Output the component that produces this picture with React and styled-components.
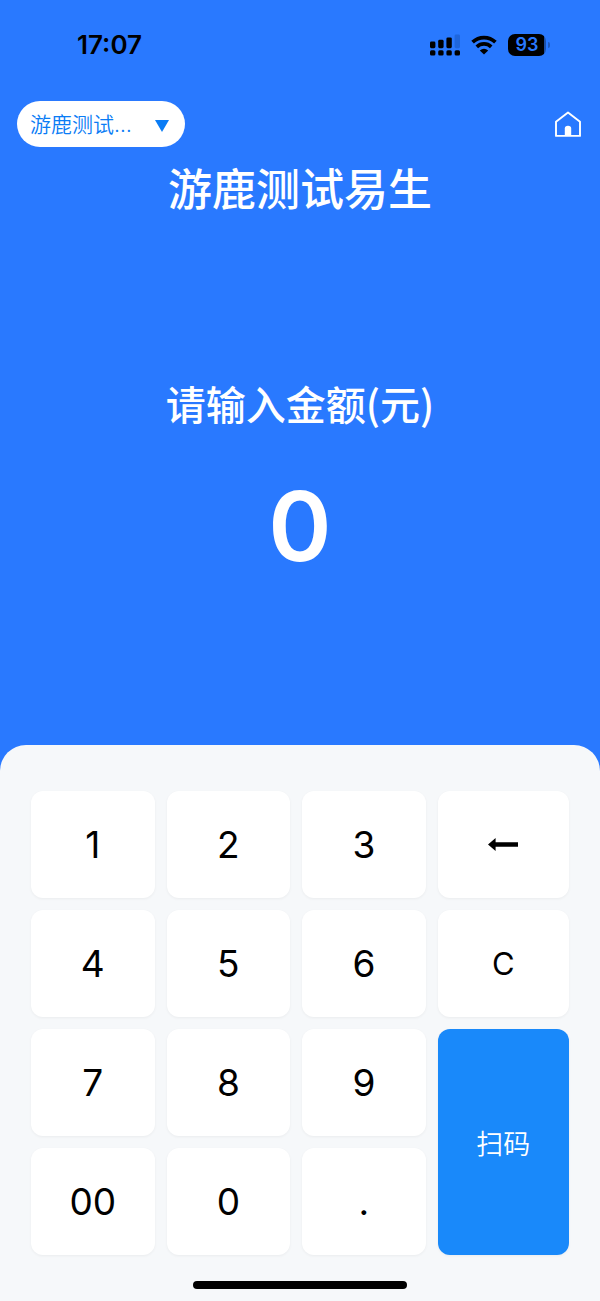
import React, { useState } from "react";
import styled, { createGlobalStyle } from "styled-components";

const GlobalStyle = createGlobalStyle`
  *, *::before, *::after { box-sizing: border-box; }
  body {
    margin: 0;
    background: #2979ff;
    font-family: Inter, "Noto Sans CJK SC", sans-serif;
  }
  button, select { font: inherit; color: inherit; border: 0; cursor: pointer; }
`;

const Page = styled.div`
  min-height: 100vh;
  display: flex;
  flex-direction: column;
  background: #2979ff;
`;

const StatusBar = styled.header`
  height: 90px;
  padding: 0 50px 0 77px;
  display: flex;
  align-items: center;
  justify-content: space-between;
  color: #000;
`;

const Clock = styled.time`
  font-size: 26px;
  line-height: 30px;
  font-weight: 600;
`;

const StatusIcons = styled.div`
  display: flex;
  align-items: center;
  gap: 11px;
`;

const Battery = styled.div`
  display: flex;
  align-items: center;
  gap: 2px;
`;

const BatteryBody = styled.span`
  width: 38px;
  height: 22px;
  border-radius: 7px;
  background: linear-gradient(90deg, #000 36px, #1c4fa6 36px);
  color: #2979ff;
  font-size: 18px;
  line-height: 22px;
  font-weight: 600;
  text-align: center;
`;

const BatteryTip = styled.span`
  width: 2px;
  height: 6px;
  border-radius: 0 2px 2px 0;
  background: #1f59bd;
`;

const TopBar = styled.nav`
  padding: 11px 19px 0 17px;
  display: flex;
  align-items: center;
  justify-content: space-between;
`;

const StorePicker = styled.label`
  display: grid;
  grid-template-columns: 1fr;
  align-items: center;
  width: 168px;
  height: 46px;
  border-radius: 23px;
  background: #fff;
  color: #0a7cf5;
`;

const StoreSelect = styled.select`
  grid-area: 1 / 1;
  width: 100%;
  height: 46px;
  padding: 0 46px 0 13px;
  border-radius: 23px;
  appearance: none;
  background: transparent;
  font-size: 21px;
  font-weight: 350;
  text-overflow: ellipsis;
  overflow: hidden;
  white-space: nowrap;
`;

const Caret = styled.svg`
  grid-area: 1 / 1;
  justify-self: end;
  margin: 4px 16px 0 0;
  pointer-events: none;
`;

const HomeButton = styled.button`
  display: flex;
  padding: 0;
  background: none;
  color: #fff;
`;

const Hero = styled.main`
  flex: 1;
  padding: 13px 16px 170px;
  color: #fff;
  text-align: center;
`;

const StoreName = styled.h1`
  margin: 0;
  font-size: 44px;
  line-height: 60px;
  font-weight: 500;
`;

const Prompt = styled.h2`
  margin: 153px 0 0;
  font-family: "Noto Sans CJK SC", sans-serif;
  font-size: 40px;
  line-height: 60px;
  font-weight: 500;
`;

const Amount = styled.output`
  display: block;
  margin-top: 45px;
  font-size: 96px;
  line-height: 96px;
  font-weight: 600;
`;

const Panel = styled.section`
  padding: 46px 31px 12px;
  border-radius: 26px 26px 0 0;
  background: #f6f8fa;
`;

const Keypad = styled.div`
  display: grid;
  grid-template-columns: 16fr 16fr 16fr 17fr;
  grid-auto-rows: 107px;
  gap: 12px;
`;

const Key = styled.button`
  display: flex;
  align-items: center;
  justify-content: center;
  padding: 0;
  border-radius: 12px;
  background: #fff;
  color: #000;
  font-size: ${(p) => (p.$small ? 31 : 37)}px;
  font-weight: 400;
  box-shadow: 0 1px 3px rgba(0, 0, 0, 0.05);
`;

const ScanKey = styled(Key)`
  grid-column: 4;
  grid-row: 3 / span 2;
  background: #1989fa;
  color: #fff;
  font-size: 27px;
  font-weight: 350;
`;

const HomeIndicator = styled.div`
  width: 214px;
  height: 8px;
  margin: 26px auto 0;
  border-radius: 4px;
  background: #000;
`;

const CellularIcon = () => (
  <svg width="30" height="22" viewBox="0 0 30 22" aria-hidden="true">
    <rect x="0" y="7.6" width="5.4" height="6.6" rx="1.4" />
    <rect x="8.2" y="5.8" width="5.4" height="8.4" rx="1.4" />
    <rect x="16.4" y="3.4" width="5.4" height="10.8" rx="1.4" />
    <rect x="24.6" y="0.5" width="5.4" height="13.7" rx="1.4" fill="#1f66dc" />
    <rect x="0" y="16.2" width="5.4" height="5.4" rx="1.5" />
    <rect x="8.2" y="16.2" width="5.4" height="5.4" rx="1.5" />
    <rect x="16.4" y="16.2" width="5.4" height="5.4" rx="1.5" />
    <rect x="24.6" y="16.2" width="5.4" height="5.4" rx="1.5" />
  </svg>
);

const WifiIcon = () => (
  <svg width="26" height="20" viewBox="0 0 26 20" fill="none" stroke="#000" aria-hidden="true">
    <path d="M1.6 7.2C8 1 18 1 24.4 7.2" strokeWidth="3.7" />
    <path d="M5.8 11.8C9.8 8 16.2 8 20.2 11.8" strokeWidth="3.7" />
    <path d="M13 19.6 8.8 15.4Q13 12 17.2 15.4Z" fill="#000" stroke="none" />
  </svg>
);

const HomeIcon = () => (
  <svg width="26" height="26" viewBox="0 0 26 26" fill="none" aria-hidden="true">
    <path
      d="M1 10.8 13 1.4 25 10.8V24.9H1Z"
      stroke="currentColor"
      strokeWidth="1.9"
      strokeLinejoin="round"
    />
    <path d="M9.8 25V17.6Q9.8 14.8 13 14.8T16.2 17.6V25Z" fill="currentColor" />
  </svg>
);

const BackspaceIcon = () => (
  <svg width="30" height="14" viewBox="0 0 30 14" aria-hidden="true">
    <path d="M0 6.5 7.6 0V4.2H30V8.8H7.6V13Z" />
  </svg>
);

const KEYS = ["1", "2", "3", "back", "4", "5", "6", "C", "7", "8", "9", "00", "0", "."];

const press = (amount, key) => {
  if (key === "C") return "0";
  if (key === "back") return amount.length > 1 ? amount.slice(0, -1) : "0";
  if (key === ".") return amount.includes(".") ? amount : amount + ".";
  if (amount === "0") return key === "00" ? "0" : key;
  return amount.length < 8 ? amount + key : amount;
};

export default function App() {
  const [amount, setAmount] = useState("0");
  return (
    <Page>
      <GlobalStyle />
      <StatusBar>
        <Clock>17:07</Clock>
        <StatusIcons>
          <CellularIcon />
          <WifiIcon />
          <Battery>
            <BatteryBody>93</BatteryBody>
            <BatteryTip />
          </Battery>
        </StatusIcons>
      </StatusBar>
      <TopBar>
        <StorePicker>
          <StoreSelect aria-label="门店">
            <option>游鹿测试易生</option>
          </StoreSelect>
          <Caret width="14" height="12" viewBox="0 0 14 12" aria-hidden="true">
            <path d="M0 0H14L7 12Z" fill="#0a7cf5" />
          </Caret>
        </StorePicker>
        <HomeButton type="button" aria-label="首页">
          <HomeIcon />
        </HomeButton>
      </TopBar>
      <Hero>
        <StoreName>游鹿测试易生</StoreName>
        <Prompt>请输入金额(元)</Prompt>
        <Amount>{amount}</Amount>
      </Hero>
      <Panel>
        <Keypad>
          {KEYS.map((key) => (
            <Key
              key={key}
              type="button"
              $small={key === "C"}
              aria-label={key === "back" ? "退格" : undefined}
              onClick={() => setAmount((value) => press(value, key))}
            >
              {key === "back" ? <BackspaceIcon /> : key}
            </Key>
          ))}
          <ScanKey type="button">扫码</ScanKey>
        </Keypad>
        <HomeIndicator />
      </Panel>
    </Page>
  );
}
